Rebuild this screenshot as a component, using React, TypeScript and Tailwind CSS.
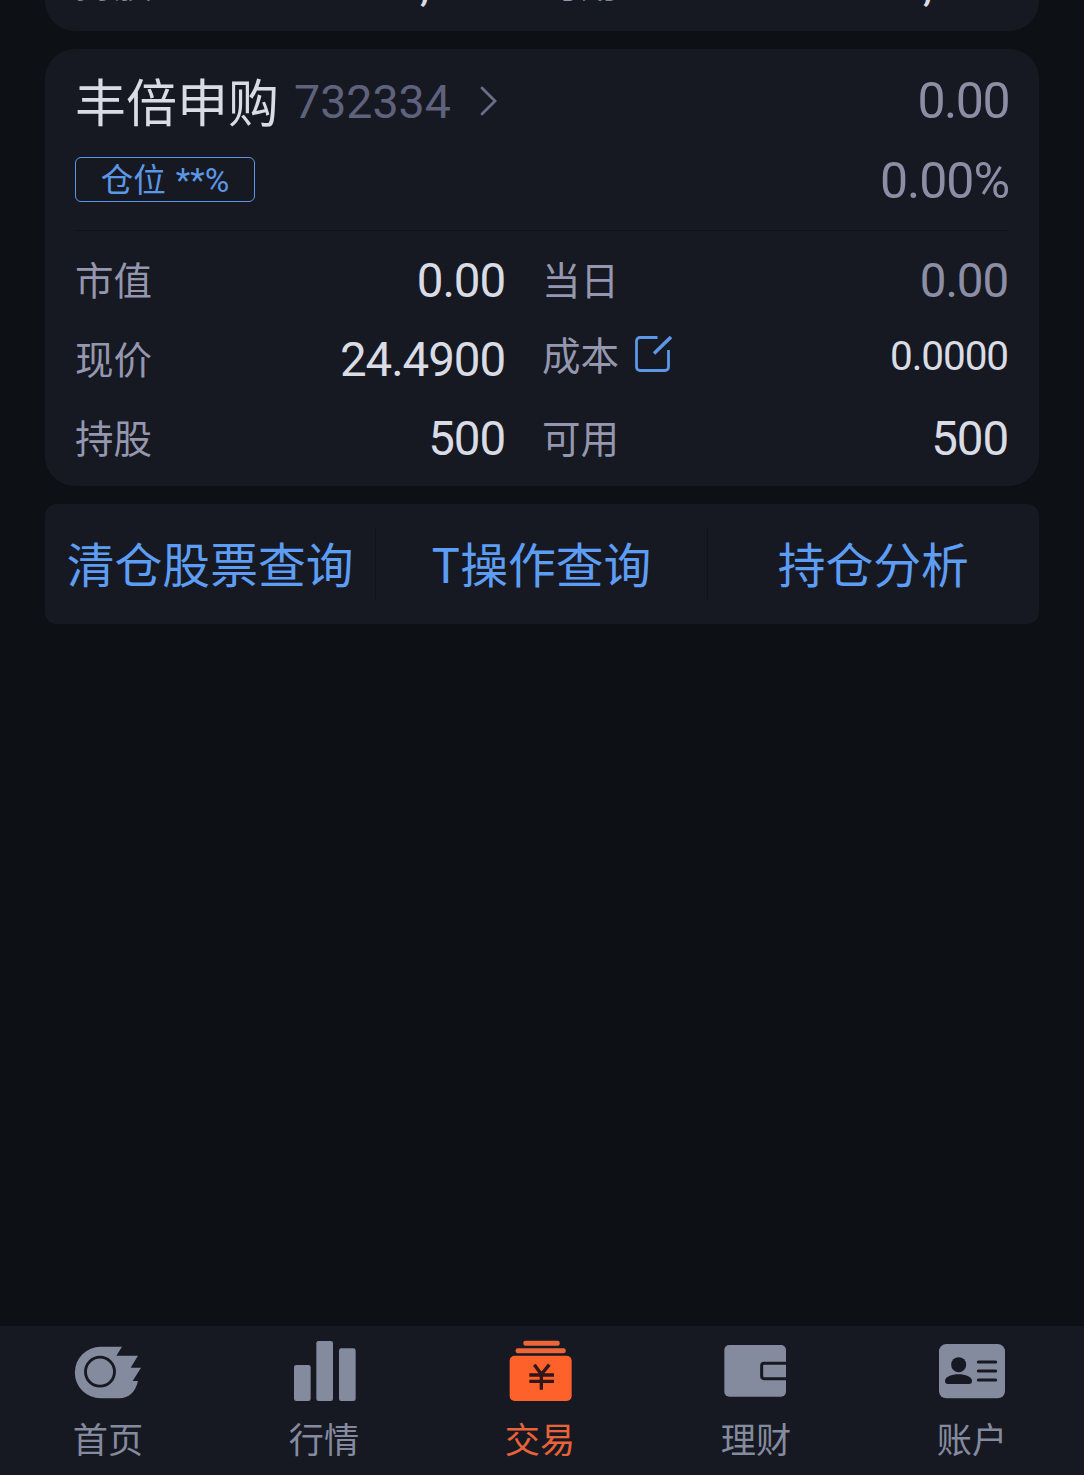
import React from 'react';
import clsx from 'clsx';

interface Field {
  label: string;
  value: string;
  muted?: boolean;
  small?: boolean;
  editable?: boolean;
}

const FIELDS: Field[] = [
  { label: '市值', value: '0.00' },
  { label: '当日', value: '0.00', muted: true },
  { label: '现价', value: '24.4900' },
  { label: '成本', value: '0.0000', small: true, editable: true },
  { label: '持股', value: '500' },
  { label: '可用', value: '500' },
];

const PREV_FIELDS: Field[] = [
  { label: '持股', value: '1,100' },
  { label: '可用', value: '1,100' },
];

const ACTIONS = ['清仓股票查询', 'T操作查询', '持仓分析'];

function EditIcon() {
  return (
    <svg width="38" height="38" viewBox="0 0 38 38" fill="none" stroke="#5b97e6" strokeWidth="2.8" className="ml-[14.5px]">
      <path d="M23.500 2.500H6A3.500 3.500 0 0 0 2.500 6v26A3.500 3.500 0 0 0 6 35.500h25a3.500 3.500 0 0 0 3.500-3.500V15" />
      <path d="M20 18.500L37 2" strokeWidth="3.500" />
    </svg>
  );
}

function HomeIcon() {
  return (
    <svg width="72" height="66" viewBox="0 0 216 198">
      <path
        fill="currentColor"
        d="M86 29H150L133 56H198L176 92H207L182 132H198C191 164 170 184 142 184H86A77.500 77.500 0 0 1 86 29Z"
      />
      <circle cx="84" cy="104" r="43.500" fill="none" stroke="#171922" strokeWidth="8.500" />
    </svg>
  );
}

function MarketIcon() {
  return (
    <svg width="72" height="66" viewBox="0 0 216 198" fill="currentColor">
      <rect x="18" y="84" width="50" height="108" rx="7" />
      <rect x="85" y="12" width="50" height="180" rx="7" />
      <rect x="153" y="34" width="50" height="158" rx="7" />
    </svg>
  );
}

function TradeIcon() {
  return (
    <svg width="72" height="66" viewBox="0 0 216 198">
      <g fill="#ff612b">
        <rect x="58" y="11" width="109" height="15" rx="6" fill="#ec6639" />
        <rect x="35" y="34" width="150" height="15" rx="6" fill="#ec6639" />
        <rect x="17" y="56" width="186" height="136" rx="15" />
      </g>
      <path
        d="M91 83L112 112L136 83M112 112V158M76 114H150M76 133H150"
        fill="none"
        stroke="#33161a"
        strokeWidth="10"
      />
    </svg>
  );
}

function FinanceIcon() {
  return (
    <svg width="72" height="66" viewBox="0 0 216 198">
      <rect x="13" y="24" width="185" height="155" rx="15" fill="currentColor" />
      <path
        d="M200 79H132Q125 79 125 86V118Q125 125 132 125H200"
        fill="none"
        stroke="#171922"
        strokeWidth="9"
      />
    </svg>
  );
}

function AccountIcon() {
  return (
    <svg width="72" height="66" viewBox="0 0 216 198">
      <rect x="9" y="21" width="198" height="163" rx="22" fill="currentColor" />
      <circle cx="68" cy="83" r="22.500" fill="#171922" />
      <path d="M27 132C27 105 108 105 108 132Q108 141 99 141H36Q27 141 27 132Z" fill="#171922" />
      <path d="M127 75H179M127 102H179M127 129H179" stroke="#171922" strokeWidth="9" strokeLinecap="round" />
    </svg>
  );
}

const TABS = [
  { label: '首页', icon: HomeIcon },
  { label: '行情', icon: MarketIcon },
  { label: '交易', icon: TradeIcon, active: true },
  { label: '理财', icon: FinanceIcon },
  { label: '账户', icon: AccountIcon },
];

function FieldRow({ field }: { field: Field }) {
  return (
    <div className={clsx('flex h-[79px] items-center justify-between', field.editable && 'pb-2')}>
      <span className="flex items-center pt-[2px] text-[38.5px] text-[#9597ae]">
        {field.label}
        {field.editable && <EditIcon />}
      </span>
      <span
        className={clsx(
          "pt-2 font-['Roboto',sans-serif]",
          field.small ? 'text-[40.5px] tracking-[-1.1px]' : 'text-[47.5px] tracking-[-1.1px]',
          field.muted ? 'text-[#8c8ea5]' : 'text-[#dadce5]'
        )}
      >
        {field.value}
      </span>
    </div>
  );
}

export default function App() {
  return (
    <div className="flex h-[1475px] w-[1084px] flex-col overflow-hidden bg-[#0d1014] font-['Noto_Sans_CJK_SC','Noto_Sans',sans-serif] leading-none">
      <main className="flex flex-1 flex-col px-[45px]">
        {/* 上一只持仓，已滚出顶部 */}
        <section className="flex h-[31px] items-end overflow-hidden rounded-b-[30px] bg-[#171922] px-[30px] pb-3">
          <div className="grid w-full grid-cols-[430px_466px] gap-x-[37px]">
            {PREV_FIELDS.map((field) => (
              <div key={field.label} className="flex h-[79px] items-center justify-between leading-[64px]">
                <span className="text-[38.5px] text-[#9597ae]">{field.label}</span>
                <span className="pt-[9px] font-['Roboto',sans-serif] text-[47.5px] tracking-[-1.1px] text-[#dadce5]">
                  {field.value}
                </span>
              </div>
            ))}
          </div>
        </section>

        {/* 持仓卡片 */}
        <section className="mt-[18px] h-[437px] rounded-[30px] bg-[#171922] px-[30px] pt-[25px]">
          <div className="flex h-[50px] items-center justify-between">
            <div className="flex items-center">
              <h2 className="pt-[2px] text-[51px] text-[#dadce5]">丰倍申购</h2>
              <span className="ml-[15px] pt-[6px] font-['Roboto',sans-serif] text-[46.500px] text-[#5f627c]">732334</span>
              <svg width="20" height="30" viewBox="0 0 20 30" fill="none" stroke="#6b6e88" strokeWidth="2.800" className="ml-[28px] mt-[3px]">
                <path d="M3 2L16 15L3 28" strokeLinecap="round" />
              </svg>
            </div>
            <span className="pt-1 font-['Roboto',sans-serif] text-[50px] tracking-[-1.500px] text-[#8c8ea5]">0.00</span>
          </div>
          <div className="mt-[33px] flex h-[45px] items-center justify-between">
            <span className="flex h-[45px] w-[180px] items-center justify-center rounded-md border border-[#5b97e6] pb-[2px] text-[#5b97e6]">
              <span className="text-[32.5px]">仓位</span>
              <span className="ml-[10px] pt-1 font-['Roboto',sans-serif] text-[33.500px]">**%</span>
            </span>
            <span className="pt-[3px] font-['Roboto',sans-serif] text-[50px] tracking-[-1px] text-[#8c8ea5]">0.00%</span>
          </div>
          <div className="mt-7 h-px bg-[#0f1117]" />
          <div className="mt-[7px] grid grid-cols-[430px_466px] gap-x-[37px]">
            {FIELDS.map((field) => (
              <FieldRow key={field.label} field={field} />
            ))}
          </div>
        </section>

        {/* 查询入口 */}
        <section className="mt-[18px] grid h-[120px] grid-cols-3 items-center rounded-[12px] bg-[#171922]">
          {ACTIONS.map((label, i) => (
            <button
              key={label}
              className={clsx(
                'flex h-[72px] items-center justify-center whitespace-nowrap pb-[3px] text-[47.8px] text-[#5d9df6]',
                i < 2 && 'border-r border-[#101218]'
              )}
            >
              {label}
            </button>
          ))}
        </section>
      </main>

      {/* 底部导航 */}
      <nav className="flex h-[149px] bg-[#171922]">
        {TABS.map(({ label, icon: Icon, active }) => (
          <a
            key={label}
            className={clsx(
              'flex w-[216px] flex-col items-center pt-[11px]',
              active ? 'text-[#e8623a]' : 'text-[#848b9e]'
            )}
          >
            <Icon />
            <span className="mt-[17px] text-[35.2px]">{label}</span>
          </a>
        ))}
      </nav>
    </div>
  );
}
